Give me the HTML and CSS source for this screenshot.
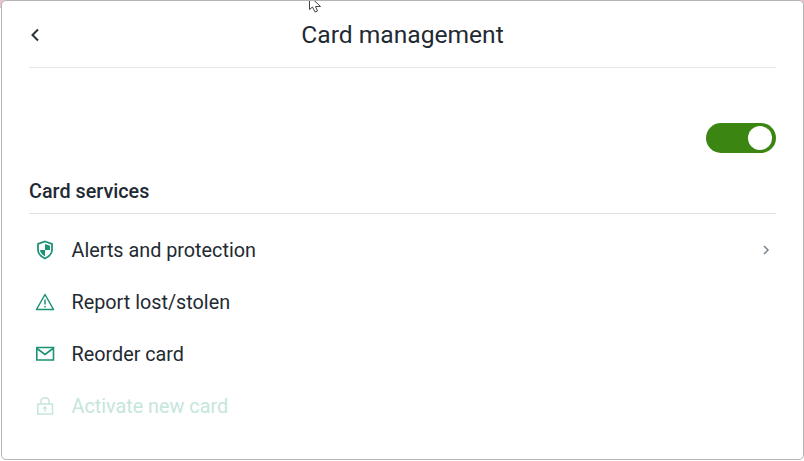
FILE: index.html
```html
<!DOCTYPE html>
<html lang="en">
<head>
  <meta charset="UTF-8">
  <meta name="viewport" content="width=device-width, initial-scale=1.0">
  <title>Card management</title>
  <link rel="stylesheet" href="styles.css">
</head>
<body>
  <div class="frame">
    <svg class="cursor" width="14" height="13" viewBox="0 0 14 13">
      <path d="M1.500 -4V9.500L4.500 7L7 12L9.500 11L7.500 6.500H12.500Z" fill="#fff" stroke="#444" stroke-width="1"/>
    </svg>

    <header class="topbar">
      <svg class="back" width="10" height="14" viewBox="0 0 10 14">
        <path d="M8 1.500L2.500 7L8 12.500" fill="none" stroke="#263238" stroke-width="2"/>
      </svg>
      <h1>Card management</h1>
    </header>

    <div class="toggle-row">
      <div class="toggle"><span class="knob"></span></div>
    </div>

    <h2>Card services</h2>

    <ul class="services">
      <li>
        <svg class="icon" width="20" height="20" viewBox="0 0 20 20">
          <path d="M10 1.500L17 4V10C17 14 14 16.500 10 18.500C6 16.500 3 14 3 10V4Z" fill="none" stroke="#1b9274" stroke-width="1.800"/>
          <path d="M10 4L15 5.800V10H10ZM5 10H10V16.200C7.500 15 5.300 13 5 10Z" fill="#1b9274"/>
        </svg>
        <span>Alerts and protection</span>
        <svg class="more" width="8" height="10" viewBox="0 0 8 10">
          <path d="M2 1L6 5L2 9" fill="none" stroke="#78828a" stroke-width="1.500"/>
        </svg>
      </li>
      <li>
        <svg class="icon" width="20" height="20" viewBox="0 0 20 20">
          <path d="M10 2.500L18.500 17.500H1.500Z" fill="none" stroke="#1b9274" stroke-width="1.500" stroke-linejoin="round"/>
          <path d="M10 7.500V12.500M10 14V15.500" fill="none" stroke="#1b9274" stroke-width="1.500"/>
        </svg>
        <span>Report lost/stolen</span>
      </li>
      <li>
        <svg class="icon" width="20" height="20" viewBox="0 0 20 20">
          <path d="M1.800 3.500H18.500V16H1.800Z" fill="none" stroke="#1b9274" stroke-width="1.600"/>
          <path d="M2 4.500L10 10.500L18 4.500" fill="none" stroke="#1b9274" stroke-width="1.600"/>
        </svg>
        <span>Reorder card</span>
      </li>
      <li class="disabled">
        <svg class="icon" width="20" height="20" viewBox="0 0 20 20">
          <path d="M2.800 8H17.500V18H2.800Z" fill="none" stroke="#c5e6dc" stroke-width="1.500"/>
          <path d="M6 8V5C6 2.800 8 1.800 10 1.800C12 1.800 14 2.800 14 5V8" fill="none" stroke="#c5e6dc" stroke-width="1.500"/>
          <path d="M10 11V16M8 12.800L10 10.800L12 12.800" fill="none" stroke="#c5e6dc" stroke-width="1.300"/>
        </svg>
        <span>Activate new card</span>
      </li>
    </ul>
  </div>
</body>
</html>
```

FILE: styles.css
```css
html, body {
  margin: 0;
  padding: 0;
}
body {
  height: 461px;
  font-family: Roboto, "Liberation Sans", sans-serif;
  color: #1f2a33;
  background:
    linear-gradient(135deg, #e8c4d2 6px, transparent 6px),
    linear-gradient(225deg, #e8c4d2 6px, transparent 6px),
    white;
}
.frame {
  position: relative;
  box-sizing: border-box;
  width: 803px;
  height: 460px;
  margin: 0 0 0 1px;
  padding: 0 27px 0 27px;
  background-color: white;
  border: 1px solid #b4b4b4;
  border-radius: 5px;
  overflow: hidden;
}
.cursor {
  position: absolute;
  top: -1px;
  left: 306px;
}
.topbar {
  position: relative;
  display: flex;
  align-items: center;
  justify-content: center;
  height: 66px;
  border-bottom: 1px solid #e8e8e8;
}
.topbar h1 {
  margin: 0;
  font-size: 24.6px;
  font-weight: 400;
}
.back {
  position: absolute;
  left: 1px;
  top: 27px;
}
.toggle-row {
  display: flex;
  justify-content: flex-end;
  padding: 55px 0 0 0;
}
.toggle {
  display: flex;
  align-items: center;
  justify-content: flex-end;
  box-sizing: border-box;
  width: 70px;
  height: 30px;
  padding-right: 4px;
  background-color: #3b8512;
  border-radius: 15px;
}
.knob {
  width: 24px;
  height: 24px;
  background-color: white;
  border-radius: 50%;
}
h2 {
  margin: 0;
  padding: 27px 0 9px 0;
  font-size: 19.800px;
  line-height: 24px;
  font-weight: 500;
  border-bottom: 1px solid #e0e0e0;
}
.services {
  list-style: none;
  margin: 0;
  padding: 10px 0 0 0;
}
.services li {
  display: flex;
  align-items: center;
  height: 52px;
  font-size: 19.800px;
}
.icon {
  margin: 0 16.500px 0 6px;
}
.more {
  margin-left: auto;
  margin-right: 6px;
}
.disabled {
  color: #c5e6dc;
}
```
